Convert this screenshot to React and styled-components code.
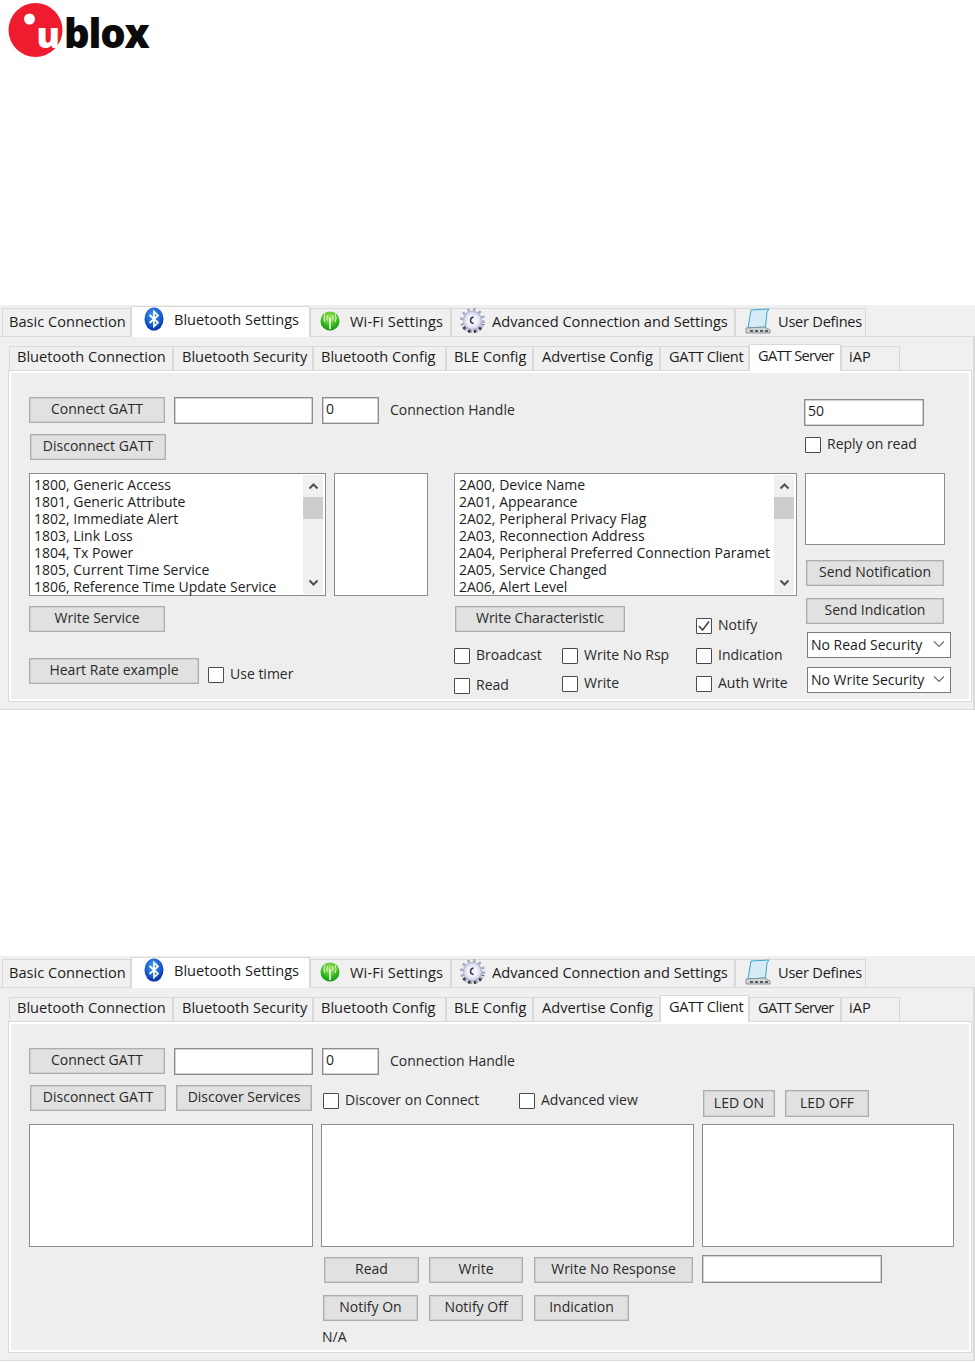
import React from "react";
import styled, { createGlobalStyle } from "styled-components";

const mainTabs = [
  { label: "Basic Connection", w: 129, pad: 6 },
  { label: "Bluetooth Settings", w: 179, pad: 12, icon: "bluetooth", iconW: 20, gap: 10, active: true },
  { label: "Wi-Fi Settings", w: 141, pad: 9, icon: "wifi", iconW: 20, gap: 10, spacing: 0.15 },
  { label: "Advanced Connection and Settings", w: 284, pad: 7, icon: "gear", iconW: 27, gap: 6 },
  { label: "User Defines", w: 131, pad: 9, icon: "scroll", iconW: 26, gap: 7, spacing: -0.25 },
];

const subTabs = [
  { label: "Bluetooth Connection", w: 164, pad: 7 },
  { label: "Bluetooth Security", w: 140, pad: 8 },
  { label: "Bluetooth Config", w: 133, pad: 7 },
  { label: "BLE Config", w: 87, pad: 7 },
  { label: "Advertise Config", w: 127, pad: 8 },
  { label: "GATT Client", w: 89, pad: 8, spacing: -0.4 },
  { label: "GATT Server", w: 92, pad: 8, spacing: -0.7 },
  { label: "iAP", w: 59, pad: 7 },
];

const services = [
  "1800, Generic Access",
  "1801, Generic Attribute",
  "1802, Immediate Alert",
  "1803, Link Loss",
  "1804, Tx Power",
  "1805, Current Time Service",
  "1806, Reference Time Update Service",
];

const characteristics = [
  "2A00, Device Name",
  "2A01, Appearance",
  "2A02, Peripheral Privacy Flag",
  "2A03, Reconnection Address",
  "2A04, Peripheral Preferred Connection Paramet",
  "2A05, Service Changed",
  "2A06, Alert Level",
];

const Logo = () => (
  <svg width="160" height="62" viewBox="0 0 160 62">
    <circle cx="35.5" cy="30" r="27" fill="#ee1c2e" />
    <circle cx="29.5" cy="19" r="5.5" fill="#fff" />
    <text x="36.5" y="48" fontFamily="Open Sans, sans-serif" fontWeight="800" fontSize="35" fill="#fff">
      u
    </text>
    <text x="64" y="48" fontFamily="Open Sans, sans-serif" fontWeight="800" fontSize="40" letterSpacing="-1.2" fill="#0b0b0b">
      blox
    </text>
  </svg>
);

const BluetoothIcon = () => (
  <svg width="20" height="24" viewBox="0 0 20 24">
    <defs>
      <radialGradient id="bt" cx="45%" cy="35%" r="70%">
        <stop offset="0" stopColor="#4aa2f0" />
        <stop offset="0.7" stopColor="#0f4fc4" />
        <stop offset="1" stopColor="#08249a" />
      </radialGradient>
    </defs>
    <ellipse cx="10" cy="12" rx="9.5" ry="11.5" fill="url(#bt)" />
    <path d="M5.5 8 L14 15.5 L10 19.5 L10 4.5 L14 8.5 L5.5 16" fill="none" stroke="#fff" strokeWidth="1.7" />
  </svg>
);

const WifiIcon = () => (
  <svg width="20" height="22" viewBox="0 0 20 22">
    <defs>
      <radialGradient id="wf" cx="50%" cy="30%" r="75%">
        <stop offset="0" stopColor="#a8e858" />
        <stop offset="0.65" stopColor="#2fb51c" />
        <stop offset="1" stopColor="#0f8a12" />
      </radialGradient>
    </defs>
    <circle cx="10" cy="11" r="9.5" fill="url(#wf)" />
    <path d="M10 8 L10 19" stroke="#fff" strokeWidth="1.6" />
    <path d="M7.5 5.5 Q6 8 7.5 10.5 M12.5 5.5 Q14 8 12.5 10.5 M5 4 Q2.8 8 5 12 M15 4 Q17.2 8 15 12" fill="none" stroke="#eafbe0" strokeWidth="1" />
  </svg>
);

const GearIcon = () => (
  <svg width="27" height="27" viewBox="0 0 27 27">
    <circle cx="13.5" cy="13.5" r="9" fill="#e2e2f4" stroke="#b9b9d4" strokeWidth="1.5" />
    <circle cx="13.5" cy="13.5" r="11" fill="none" stroke="#a6a6bc" strokeWidth="3" strokeDasharray="2.4 3.4" />
    <path d="M4.5 20 A11 11 0 0 0 24 17" fill="none" stroke="#3b3b48" strokeWidth="3" strokeDasharray="2.4 3.4" />
    <circle cx="13.5" cy="13.5" r="5.5" fill="#f4f4fa" />
    <path d="M14.5 10 Q11.5 10.5 11.5 13.5 Q11.5 16 14.5 16.5" fill="none" stroke="#33334a" strokeWidth="1.4" />
  </svg>
);

const ScrollIcon = () => (
  <svg width="26" height="26" viewBox="0 0 26 26">
    <path d="M6 2 L24 1 L22 4 L20.5 19 L3 20 Z" fill="#d5ecf6" stroke="#39a5cf" strokeWidth="1" />
    <path d="M1 20 L20 19 L25 22 L25 25 L1 25 Z" fill="#cfd4d6" stroke="#7b8489" strokeWidth="0.8" />
    <path d="M5 23 H8 M10 23 H13 M15 23 H18 M20 23 H23" stroke="#2b3338" strokeWidth="1.6" />
  </svg>
);

const tabIcons = {
  bluetooth: <BluetoothIcon />,
  wifi: <WifiIcon />,
  gear: <GearIcon />,
  scroll: <ScrollIcon />,
};

const Chevron = ({ up }) => (
  <svg width="11" height="8" viewBox="0 0 11 8">
    <path d={up ? "M1.5 6.5 L5.5 2.5 L9.5 6.5" : "M1.5 1.5 L5.5 5.5 L9.5 1.5"} fill="none" stroke="#505050" strokeWidth="2" />
  </svg>
);

const MainTabs = () => (
  <MainTabStrip>
    {mainTabs.map((tab) => (
      <MainTab key={tab.label} $w={tab.w} $pad={tab.pad} $spacing={tab.spacing} $active={tab.active}>
        {tab.icon && (
          <TabIcon $w={tab.iconW} $gap={tab.gap}>
            {tabIcons[tab.icon]}
          </TabIcon>
        )}
        <span>{tab.label}</span>
      </MainTab>
    ))}
  </MainTabStrip>
);

const SubTabs = ({ active }) => (
  <SubTabStrip>
    {subTabs.map((tab) => (
      <SubTab key={tab.label} $w={tab.w} $pad={tab.pad} $spacing={tab.spacing} $active={tab.label === active}>
        {tab.label}
      </SubTab>
    ))}
  </SubTabStrip>
);

const List = ({ items, w }) => (
  <ListBox $w={w}>
    <ListItems>
      {items.map((item) => (
        <ListItem key={item}>{item}</ListItem>
      ))}
    </ListItems>
    <ScrollBar>
      <ScrollArrow>
        <Chevron up />
      </ScrollArrow>
      <ScrollThumb />
      <ScrollArrow>
        <Chevron />
      </ScrollArrow>
    </ScrollBar>
  </ListBox>
);

const Check = ({ label, checked, w, mt, ml }) => (
  <CheckItem $w={w} $mt={mt} $ml={ml}>
    <CheckBox>
      {checked && (
        <svg width="14" height="14" viewBox="0 0 14 14">
          <path d="M2 7 L5.5 11 L12 2.5" fill="none" stroke="#444" strokeWidth="1.6" />
        </svg>
      )}
    </CheckBox>
    <CheckText>{label}</CheckText>
  </CheckItem>
);

const Select = ({ label, mt }) => (
  <SelectBox $mt={mt}>
    {label}
    <svg width="12" height="8" viewBox="0 0 12 8">
      <path d="M1 1.5 L6 6.5 L11 1.5" fill="none" stroke="#6a6a6a" strokeWidth="1.1" />
    </svg>
  </SelectBox>
);

const ConnectRow = () => (
  <Row>
    <Button $w={136}>Connect GATT</Button>
    <Input $w={139} $ml={9} />
    <Input $w={57} $ml={9}>
      0
    </Input>
    <Label $ml={11} $mt={3}>
      Connection Handle
    </Label>
  </Row>
);

const ServerPane = () => (
  <Pane>
    <Row>
      <MainColumn>
        <ConnectRow />
        <Row $mt={10}>
          <Button $w={136} $ml={1}>
            Disconnect GATT
          </Button>
        </Row>
        <Row $mt={13}>
          <ServicesColumn>
            <Row>
              <List items={services} w={297} />
              <EmptyList $w={94} $ml={8} />
            </Row>
            <Button $w={136} $mt={10}>
              Write Service
            </Button>
            <Row $mt={26}>
              <Button $w={170}>Heart Rate example</Button>
              <Check label="Use timer" ml={9} mt={9} />
            </Row>
          </ServicesColumn>
          <div>
            <List items={characteristics} w={343} />
            <CheckGrid>
              <Button $w={170} $ml={1} $span={2}>
                Write Characteristic
              </Button>
              <Check label="Notify" checked mt={12} />
              <Check label="Broadcast" />
              <Check label="Write No Rsp" />
              <Check label="Indication" />
              <Check label="Read" mt={2} />
              <Check label="Write" />
              <Check label="Auth Write" />
            </CheckGrid>
          </div>
        </Row>
      </MainColumn>
      <SideColumn>
        <Input $w={120} $mt={2}>
          50
        </Input>
        <Check label="Reply on read" mt={11} ml={1} />
        <EmptyList $w={140} $h={72} $ml={1} $mt={20} />
        <Button $w={138} $ml={2} $mt={15}>
          Send Notification
        </Button>
        <Button $w={138} $ml={2} $mt={12}>
          Send Indication
        </Button>
        <Select label="No Read Security" mt={8} />
        <Select label="No Write Security" mt={9} />
      </SideColumn>
    </Row>
  </Pane>
);

const ClientPane = () => (
  <Pane>
    <ConnectRow />
    <Row $mt={10}>
      <Button $w={136} $ml={1}>
        Disconnect GATT
      </Button>
      <Button $w={136} $ml={10}>
        Discover Services
      </Button>
      <Check label="Discover on Connect" w={196} ml={11} mt={8} />
      <Check label="Advanced view" w={184} mt={8} />
      <Button $w={72} $h={27} $mt={5}>
        LED ON
      </Button>
      <Button $w={84} $h={27} $ml={10} $mt={5}>
        LED OFF
      </Button>
    </Row>
    <Row $mt={7}>
      <EmptyList $w={284} />
      <EmptyList $w={373} $ml={8} />
      <EmptyList $w={252} $ml={8} />
    </Row>
    <ActionArea>
      <Row>
        <Button $w={95} $ml={1} $mt={2}>
          Read
        </Button>
        <Button $w={94} $ml={10} $mt={2}>
          Write
        </Button>
        <Button $w={159} $ml={11} $mt={2}>
          Write No Response
        </Button>
        <Input $w={180} $h={28} $ml={9} />
      </Row>
      <Row $mt={12}>
        <Button $w={95}>Notify On</Button>
        <Button $w={94} $ml={11}>
          Notify Off
        </Button>
        <Button $w={95} $ml={11}>
          Indication
        </Button>
      </Row>
      <Label $mt={6} $ml={-1}>
        N/A
      </Label>
    </ActionArea>
  </Pane>
);

const App = () => (
  <Page>
    <GlobalStyle />
    <Header>
      <Logo />
    </Header>
    <Window>
      <MainTabs />
      <OuterPane>
        <SubTabs active="GATT Server" />
        <ServerPane />
      </OuterPane>
    </Window>
    <Window $mt={246}>
      <MainTabs />
      <OuterPane>
        <SubTabs active="GATT Client" />
        <ClientPane />
      </OuterPane>
    </Window>
  </Page>
);

export default App;

const GlobalStyle = createGlobalStyle`
  body {
    margin: 0;
    background: #fff;
    font-family: "Open Sans", "Noto Sans", sans-serif;
    font-size: 14px;
    color: #1c1c1c;
  }
`;

const Page = styled.div`
  width: 975px;
  height: 1362px;
  overflow: hidden;
`;

const Header = styled.div`
  height: 305px;
`;

const Window = styled.div`
  height: 405px;
  margin-top: ${(props) => props.$mt || 0}px;
  background: #f0f0f0;
  box-sizing: border-box;
`;

const MainTabStrip = styled.div`
  display: flex;
  align-items: flex-end;
  height: 31px;
  padding-left: 2px;
`;

const MainTab = styled.div`
  position: relative;
  z-index: ${(props) => (props.$active ? 2 : 0)};
  display: flex;
  align-items: center;
  box-sizing: border-box;
  width: ${(props) => props.$w}px;
  height: ${(props) => (props.$active ? 31 : 28)}px;
  margin-bottom: ${(props) => (props.$active ? -1 : 0)}px;
  padding: ${(props) => `0 0 ${props.$active ? 6 : 4}px ${props.$pad}px`};
  background: ${(props) => (props.$active ? "#fff" : "#f0f0f0")};
  border: 1px solid #d9d9d9;
  border-bottom: none;
  font-size: 14.6px;
  letter-spacing: ${(props) => props.$spacing || 0}px;
  white-space: nowrap;
`;

const TabIcon = styled.span`
  display: flex;
  flex-shrink: 0;
  align-items: center;
  justify-content: center;
  width: ${(props) => props.$w}px;
  height: 24px;
  margin-right: ${(props) => props.$gap}px;
`;

const OuterPane = styled.div`
  box-sizing: border-box;
  height: 374px;
  border: 1px solid #dadada;
  border-left: none;
  border-right-width: 2px;
  padding: 8px 0 0 8px;
`;

const SubTabStrip = styled.div`
  display: flex;
  align-items: flex-end;
  height: 25px;
  padding-left: 1px;
`;

const SubTab = styled.div`
  position: relative;
  z-index: ${(props) => (props.$active ? 2 : 0)};
  display: flex;
  align-items: center;
  box-sizing: border-box;
  width: ${(props) => props.$w}px;
  height: ${(props) => (props.$active ? 27 : 24)}px;
  margin-bottom: ${(props) => (props.$active ? -1 : 0)}px;
  padding: ${(props) => `0 0 ${props.$active ? 7 : 5}px ${props.$pad}px`};
  background: ${(props) => (props.$active ? "#fff" : "#f0f0f0")};
  border: 1px solid #d9d9d9;
  border-bottom: none;
  font-size: 14.6px;
  letter-spacing: ${(props) => props.$spacing || 0}px;
  white-space: nowrap;
`;

const Pane = styled.div`
  box-sizing: border-box;
  height: 332px;
  margin-right: 1px;
  padding: 26px 0 0 20px;
  background: #eeeeee;
  border: 1px solid #d9d9d9;
  box-shadow: inset 0 0 0 2px #fff;
`;

const Row = styled.div`
  display: flex;
  align-items: flex-start;
  margin-top: ${(props) => props.$mt || 0}px;
`;

const MainColumn = styled.div`
  width: 775px;
`;

const ServicesColumn = styled.div`
  width: 425px;
`;

const SideColumn = styled.div`
  display: flex;
  flex-direction: column;
  align-items: flex-start;
`;

const Button = styled.div`
  display: flex;
  flex-shrink: 0;
  align-items: center;
  justify-content: center;
  box-sizing: border-box;
  width: ${(props) => props.$w}px;
  height: ${(props) => props.$h || 26}px;
  margin-top: ${(props) => props.$mt || 0}px;
  margin-left: ${(props) => props.$ml || 0}px;
  padding-bottom: 3px;
  grid-column: ${(props) => (props.$span ? `span ${props.$span}` : "auto")};
  background: #e1e1e1;
  border: 1px solid #adadad;
  box-shadow: inset 0 0 0 0.5px #bdbdbd;
  color: #2a2a2a;
  white-space: nowrap;
`;

const Input = styled.div`
  flex-shrink: 0;
  box-sizing: border-box;
  width: ${(props) => props.$w}px;
  height: ${(props) => props.$h || 27}px;
  margin-top: ${(props) => props.$mt || 0}px;
  margin-left: ${(props) => props.$ml || 0}px;
  padding-left: 3px;
  background: #fff;
  border: 1px solid #8c8c8c;
  box-shadow: inset 0 0 0 0.5px #a5a5a5;
  line-height: 22px;
`;

const Label = styled.div`
  margin-top: ${(props) => props.$mt || 0}px;
  margin-left: ${(props) => props.$ml || 0}px;
  line-height: 19px;
  color: #2a2a2a;
  white-space: nowrap;
`;

const ListBox = styled.div`
  display: flex;
  flex-shrink: 0;
  box-sizing: border-box;
  width: ${(props) => props.$w}px;
  height: 123px;
  padding: 1px;
  background: #fff;
  border: 1px solid #8c8c8c;
`;

const EmptyList = styled.div`
  flex-shrink: 0;
  box-sizing: border-box;
  width: ${(props) => props.$w}px;
  height: ${(props) => props.$h || 123}px;
  margin-top: ${(props) => props.$mt || 0}px;
  margin-left: ${(props) => props.$ml || 0}px;
  background: #fff;
  border: 1px solid #8c8c8c;
`;

const ListItems = styled.div`
  flex: 1;
  min-width: 0;
  padding: 1px 0 0 3px;
`;

const ListItem = styled.div`
  height: 17px;
  line-height: 17px;
  white-space: nowrap;
`;

const ScrollBar = styled.div`
  display: flex;
  flex-direction: column;
  width: 20px;
  margin-right: 1px;
  background: #f0f0f0;
`;

const ScrollArrow = styled.div`
  display: flex;
  align-items: center;
  justify-content: center;
  height: 22px;
`;

const ScrollThumb = styled.div`
  flex: none;
  height: 22px;
  margin-bottom: auto;
  background: #cdcdcd;
`;

const CheckGrid = styled.div`
  display: grid;
  grid-template-columns: 108px 134px 100px;
  grid-template-rows: 42px 28px 18px;
  align-items: start;
  margin-top: 10px;
`;

const CheckItem = styled.div`
  display: flex;
  flex-shrink: 0;
  align-items: flex-start;
  gap: 6px;
  width: ${(props) => (props.$w ? `${props.$w}px` : "auto")};
  margin-top: ${(props) => props.$mt || 0}px;
  margin-left: ${(props) => props.$ml || 0}px;
  line-height: 16px;
  color: #2a2a2a;
  white-space: nowrap;
`;

const CheckText = styled.span`
  margin-top: -1px;
`;

const CheckBox = styled.span`
  display: flex;
  flex-shrink: 0;
  align-items: center;
  justify-content: center;
  box-sizing: border-box;
  width: 16px;
  height: 16px;
  background: #fff;
  border: 1px solid #4a4a4a;
  border-radius: 1px;
`;

const SelectBox = styled.div`
  display: flex;
  align-items: center;
  justify-content: space-between;
  box-sizing: border-box;
  width: 144px;
  height: 26px;
  margin-top: ${(props) => props.$mt || 0}px;
  margin-left: 3px;
  padding: 0 5px 2px 3px;
  background: #fff;
  border: 1px solid #7a7a7a;
  white-space: nowrap;
`;

const ActionArea = styled.div`
  margin: 8px 0 0 294px;
`;
